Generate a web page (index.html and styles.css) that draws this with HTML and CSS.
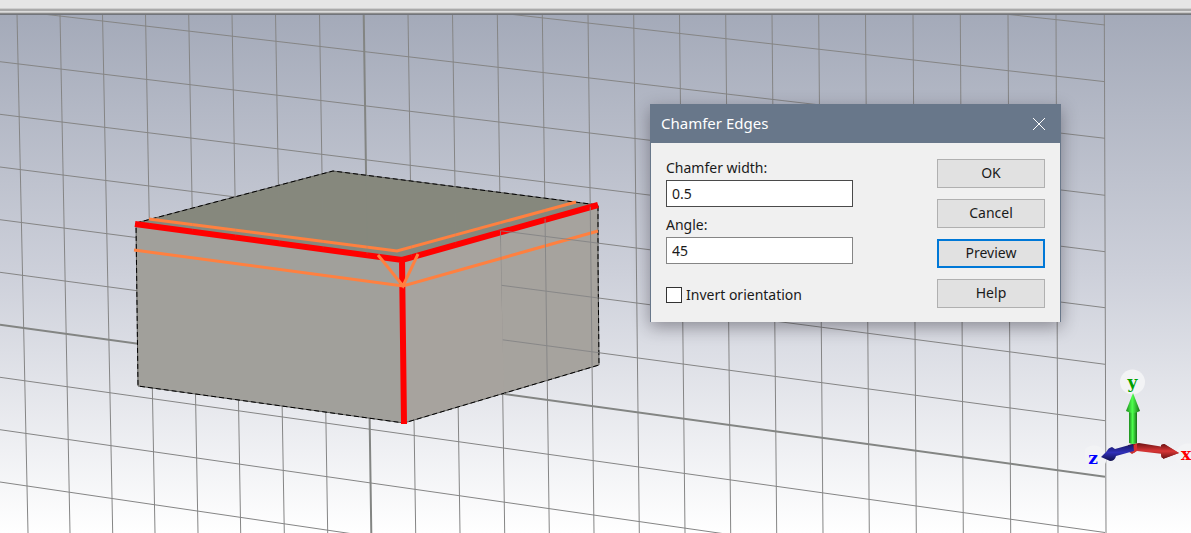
FILE: index.html
```html
<!DOCTYPE html>
<html lang="en">
<head>
<meta charset="utf-8">
<title>Chamfer Edges</title>
<link rel="stylesheet" href="styles.css">
</head>
<body>
<div class="toolbar-edge"></div>
<main class="viewport">
  <svg class="scene" viewBox="0 15 1191 518" preserveAspectRatio="xMinYMin slice" role="img" aria-label="Block with three selected edges">
    <defs>
      <clipPath id="top-clip"><path d="M333 171L598 205L402 259L136 223Z"/></clipPath>
      <clipPath id="side-clip"><path d="M500 231L598 205L600 365L504 394Z"/></clipPath>
      <g id="grid">
        <path class="grid-line" d="M17 14L28 533M60 14L70 533M102.500 14L112.700 533M145.500 14L155 533M188.700 14L198 533M232 14L240.700 533M275.500 14L284.300 533M319.500 14L327.700 533M408 14L415.700 533M452.500 14L460 533M497.300 14L504.700 533M542.300 14L549.300 533M588 14L594 533M633.700 14L639.300 533M679.500 14L685 533M725.700 14L730.700 533M772 14L776.700 533M818.700 14L823 533M865.500 14L869.300 533M913 14L916.300 533M960.300 14L963.300 533M1008 14L1010.700 533M1056 14L1058 533M1104.300 14L1106 533"/>
        <path class="grid-line" d="M0 -96L1105 25M0 -43.700L1105 81.700M0 9L1105 138.300M0 61.700L1105 195.300M0 114.300L1105 251.700M0 167L1105 307.700M0 219.700L1105 364.300M0 272.300L1105 420.700M0 377.300L1105 532.500M0 429.700L1105 588.500M0 482L1105 644.500"/>
        <path class="grid-axis" d="M363.700 14L371.300 533M0 324.700L1105 476.700"/>
      </g>
    </defs>
    <use href="#grid"/>
    <path class="face-top" d="M333 171L598 205L402 259L136 223Z"/>
    <path class="face-left" d="M136 223L402 259L404 423L138 386Z"/>
    <path class="face-right" d="M402 259L598 205L599 365L404 423Z"/>
    <path class="outline" d="M136 223L333 171L598 205V260L599 365L404 423L138 386L136 223"/>
    <path class="outline-dash" d="M136 223L333 171L598 205V260L599 365L404 423L138 386L136 223"/>
    <path class="selected" d="M135 224L402 260L598 205M402 259L404 424"/>
    <path class="chamfer" d="M149 219L397 251L576 202M134 250L403 286L598 231M378 255L403 286L418 254"/>
    <use href="#grid" clip-path="url(#top-clip)" opacity=".15"/>
    <use href="#grid" clip-path="url(#side-clip)" opacity=".9"/>
  </svg>

  <svg class="triad" viewBox="1085 368 106 104" role="img" aria-label="Coordinate axes">
    <defs>
      <linearGradient id="green"><stop offset="0" stop-color="#1c8a1c"/><stop offset=".45" stop-color="#4dff4d"/><stop offset="1" stop-color="#176f17"/></linearGradient>
      <linearGradient id="red" x2="0" y2="1"><stop offset="0" stop-color="#6e1414"/><stop offset=".5" stop-color="#d93636"/><stop offset="1" stop-color="#701515"/></linearGradient>
      <linearGradient id="blue" x2="0" y2="1"><stop offset="0" stop-color="#15155c"/><stop offset=".5" stop-color="#3030b8"/><stop offset="1" stop-color="#10104c"/></linearGradient>
    </defs>
    <g class="halo"><circle cx="1132.500" cy="382" r="12.500"/><circle cx="1094" cy="458" r="12.500"/><circle cx="1188" cy="456" r="12.500"/></g>
    <path fill="url(#red)" d="M1128 445L1139 443L1164 447V444L1179 453L1163 459V454L1137 451L1132 454L1128 451Z"/>
    <path fill="url(#red)" d="M1161 445Q1164 443 1166 445L1179 453L1165 458Q1161 459 1161 455Z"/>
    <path fill="url(#blue)" d="M1133 444L1115 449L1112 447Q1108 448 1107 451L1101 457L1110 461Q1115 461 1116 456L1134 451Z"/>
    <path fill="#d83030" d="M1134 445L1137 443V450L1134 453Z"/>
    <path fill="url(#green)" d="M1129 409H1137V443Q1133 445 1129 443Z"/>
    <path fill="url(#green)" d="M1133 393L1140 411Q1133 415 1126 411Z"/>
    <text class="axis axis-y" x="1132.500" y="388">y</text>
    <text class="axis axis-z" x="1093" y="464">z</text>
    <text class="axis axis-x" x="1186" y="460">x</text>
  </svg>

  <form class="dialog" role="dialog" aria-labelledby="dialog-title">
    <header class="title-bar">
      <h1 class="title" id="dialog-title">Chamfer Edges</h1>
      <button class="close" type="button" aria-label="Close"><svg class="close-icon" viewBox="0 0 12 12"><path d="M0 0L12 12M12 0L0 12"/></svg></button>
    </header>
    <div class="dialog-body">
      <div class="fields">
        <label class="label" for="width">Chamfer width:</label>
        <input class="text-box active" id="width" type="text" value="0.5">
        <label class="label" for="angle">Angle:</label>
        <input class="text-box" id="angle" type="text" value="45">
        <div class="check-row">
          <input class="check" id="invert" type="checkbox">
          <label for="invert">Invert orientation</label>
        </div>
      </div>
      <div class="actions">
        <button class="button" type="button">OK</button>
        <button class="button" type="button">Cancel</button>
        <button class="button focused" type="button">Preview</button>
        <button class="button" type="button">Help</button>
      </div>
    </div>
  </form>
</main>
</body>
</html>
```
FILE: styles.css
```css
* { box-sizing: border-box; }
body {
  margin: 0;
  height: 100vh;
  display: flex;
  flex-direction: column;
  overflow: hidden;
  font-family: "Noto Sans", sans-serif;
  font-size: 14px;
  line-height: 20px;
  color: #1a1a1a;
}
.toolbar-edge {
  flex: none;
  height: 14px;
  background: linear-gradient(#e6e6e6 8px, #cfcfcf 8px 9px, #aaa 9px 11px, #dcdcdc 11px 12px, #c6c6c6 12px 13px, #8a8a8a 13px);
}
.viewport {
  position: relative;
  flex: 1;
  min-height: 0;
  border-top: 1px solid #72757b;
  background: linear-gradient(#a4aab9, #cdd0da 50%, #fff);
}
.scene { display: block; width: 100%; height: 100%; }
.grid-line { fill: none; stroke: #858585; stroke-width: 1; }
.grid-axis { fill: none; stroke: #838583; stroke-width: 2; }
.face-top { fill: #87897d; }
.face-left { fill: #a1a09b; }
.face-right { fill: #a7a39e; }
.outline { fill: none; stroke: #5f5f5c; stroke-width: 1; }
.outline-dash { fill: none; stroke: #000; stroke-width: 1; stroke-dasharray: 5 3; }
.selected { fill: none; stroke: #f00; stroke-width: 6; }
.chamfer { fill: none; stroke: #ff8040; stroke-width: 3; }

.triad { position: absolute; right: 0; bottom: 61px; width: 106px; height: 104px; }
.halo { fill: #f2f3f5; }
.axis { font: bold 17px "DejaVu Serif", serif; text-anchor: middle; }
.axis-x { fill: #f00; }
.axis-y { fill: #00a000; }
.axis-z { fill: #00f; }

.dialog {
  position: absolute;
  left: 650px;
  top: 89px;
  width: 411px;
  border: 1px solid #68778a;
  border-bottom: 0;
  background: #f0f0f0;
  box-shadow: 0 5px 16px rgba(30, 25, 35, .4);
}
.title-bar {
  display: flex;
  align-items: center;
  justify-content: space-between;
  height: 38px;
  padding: 0 15px 0 10px;
  background: #68778a;
  color: #fff;
}
.title { margin: 0; padding-bottom: 2px; font-size: 15px; font-weight: 400; }
.close { display: flex; padding: 0; border: 0; background: none; }
.close-icon { width: 12px; height: 12px; fill: none; stroke: #fff; stroke-width: 1; overflow: visible; }
.dialog-body {
  display: flex;
  justify-content: space-between;
  padding: 15px 15px 14px;
}
.fields { display: flex; flex-direction: column; width: 187px; }
.label { height: 22px; }
.text-box {
  height: 27px;
  margin: 0 0 8px;
  padding: 0 5px;
  border: 1px solid #858585;
  border-radius: 0;
  background: #fff;
  font: inherit;
  color: inherit;
}
.text-box.active { border-color: #4a4a4a; }
.check-row { display: flex; align-items: center; gap: 4px; margin-top: 13px; }
.check {
  appearance: none;
  width: 16px;
  height: 16px;
  margin: 0;
  border: 1px solid #333;
  background: #fff;
}
.actions { display: flex; flex-direction: column; gap: 11px; width: 108px; padding-top: 1px; }
.button {
  height: 28px;
  padding: 0 0 1px;
  border: 1px solid #b0b0b0;
  border-radius: 0;
  background: #e1e1e1;
  font: inherit;
  color: inherit;
}
.actions .button { height: 29px; }
.button.focused { border: 2px solid #0078d7; }
```
